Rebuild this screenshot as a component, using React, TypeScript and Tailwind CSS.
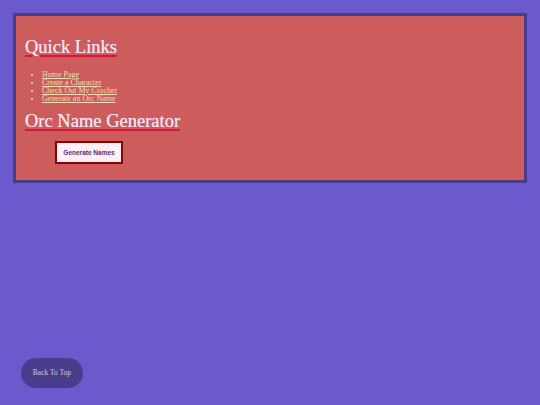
export default function App() {
  const links = ["Home Page", "Create a Character", "Check Out My Crochet", "Generate an Orc Name"];

  return (
    <div className="min-h-screen bg-[#6a5acd] pt-[13px] px-[13px] font-['Liberation_Serif',serif]">
      {/* Main panel */}
      <div className="border-[3px] border-[#483d8b] bg-[#cd5c5c] pl-[9px] pt-[19px] pb-[16px]">
        <h2 className="text-[18.5px] leading-[24px] text-[#f3e3f3] [text-shadow:0_0_0.5px_#f3e3f3] underline decoration-[#dc143c] decoration-2 underline-offset-[2px]">
          Quick Links
        </h2>

        <ul className="mt-[12px] ml-[17px] list-disc text-[8px] leading-[8px] text-[#f5deb3] marker:text-[#f3e3f3]">
          {links.map((l) => (
            <li key={l}>
              <a href="#" className="underline">{l}</a>
            </li>
          ))}
        </ul>

        <h2 className="mt-[6px] text-[18.5px] leading-[24px] text-[#f3e3f3] [text-shadow:0_0_0.5px_#f3e3f3] underline decoration-[#dc143c] decoration-2 underline-offset-[2px]">
          Orc Name Generator
        </h2>

        <button className="mt-[8px] ml-[30px] w-[68px] h-[23px] border-2 border-[#8b0000] bg-[#fff0f5] text-[6.5px] font-bold text-[#3f3385] font-['Liberation_Sans',sans-serif]">
          Generate Names
        </button>
      </div>

      {/* Back to top */}
      <button className="fixed left-[21px] bottom-[17px] w-[62px] h-[30px] rounded-full bg-[#483d8b] text-[7.5px] text-[#d0cce0]">
        Back To Top
      </button>
    </div>
  );
}
